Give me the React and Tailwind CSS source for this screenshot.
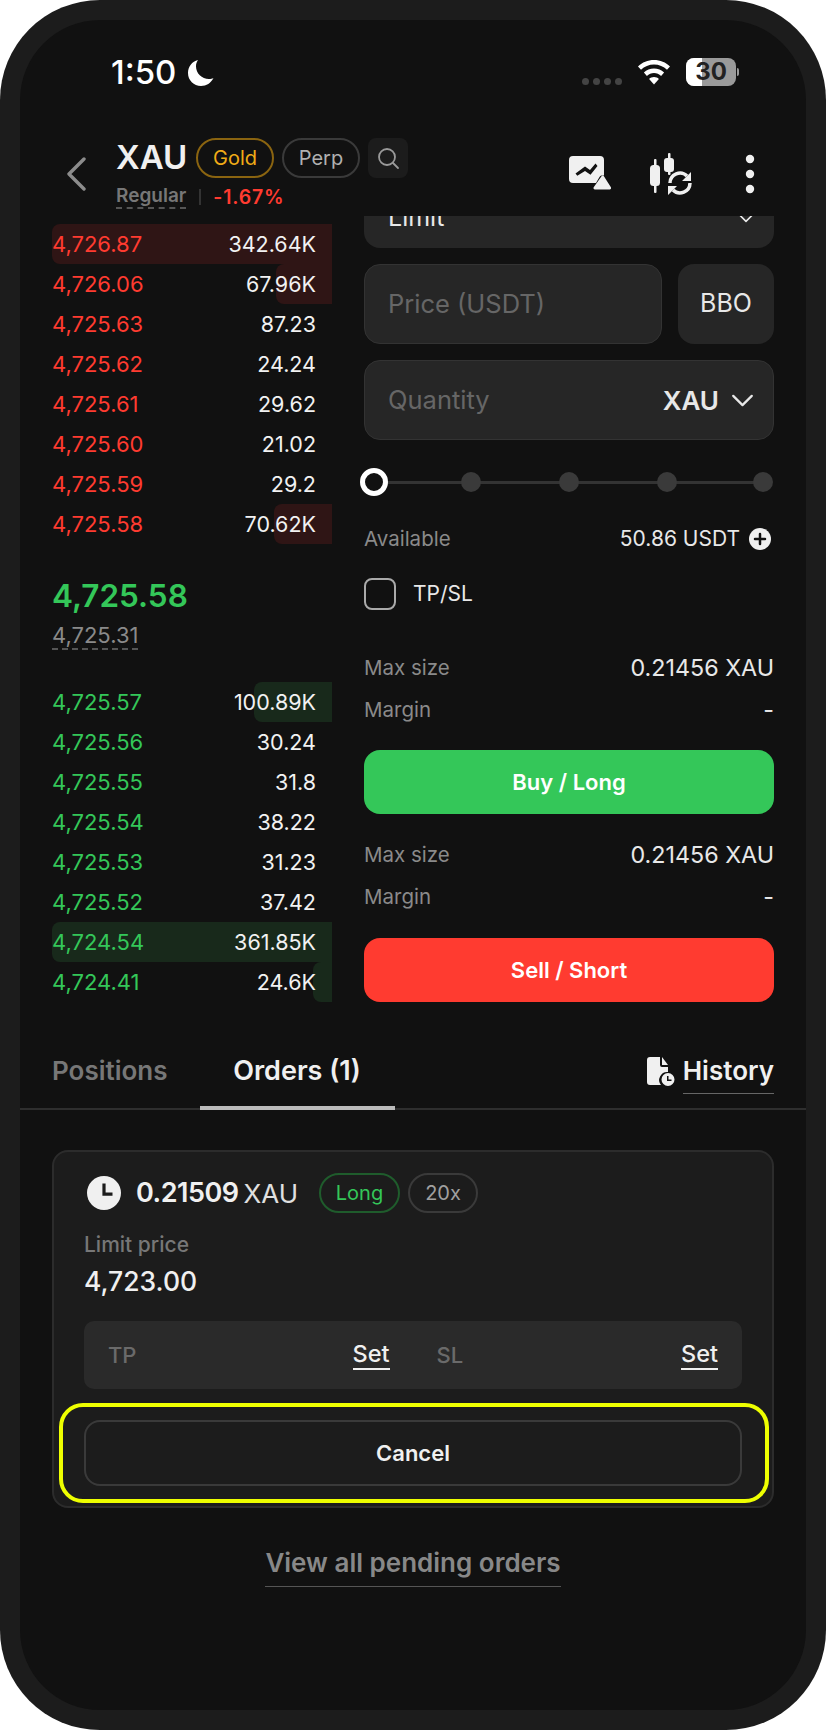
const askRows = [
  { price: '4,726.87', size: '342.64K', depth: 280 },
  { price: '4,726.06', size: '67.96K', depth: 56 },
  { price: '4,725.63', size: '87.23', depth: 0 },
  { price: '4,725.62', size: '24.24', depth: 0 },
  { price: '4,725.61', size: '29.62', depth: 0 },
  { price: '4,725.60', size: '21.02', depth: 0 },
  { price: '4,725.59', size: '29.2', depth: 0 },
  { price: '4,725.58', size: '70.62K', depth: 58 },
];

const bidRows = [
  { price: '4,725.57', size: '100.89K', depth: 78 },
  { price: '4,725.56', size: '30.24', depth: 0 },
  { price: '4,725.55', size: '31.8', depth: 0 },
  { price: '4,725.54', size: '38.22', depth: 0 },
  { price: '4,725.53', size: '31.23', depth: 0 },
  { price: '4,725.52', size: '37.42', depth: 0 },
  { price: '4,724.54', size: '361.85K', depth: 280 },
  { price: '4,724.41', size: '24.6K', depth: 19 },
];

const BookRow = ({ row, ask }) => (
  <div className="relative flex h-10 items-center justify-between pr-4">
    {row.depth > 0 && (
      <div
        className={`absolute right-0 top-0 h-10 rounded-l-[8px] ${ask ? 'bg-[#2f1515]' : 'bg-[#18291b]'}`}
        style={{ width: row.depth }}
      />
    )}
    <span className={`relative text-[22px] ${ask ? 'text-[#ff3b30]' : 'text-[#34c759]'}`}>{row.price}</span>
    <span className="relative text-[21.500px] text-[#f2f2f2]">{row.size}</span>
  </div>
);

const Chevron = ({ className }) => (
  <svg viewBox="0 0 24 14" className={className} fill="none" stroke="currentColor" strokeWidth="2.4" strokeLinecap="round" strokeLinejoin="round">
    <path d="M2 2l10 10L22 2" />
  </svg>
);

const InfoRow = ({ label, value }) => (
  <div className="flex h-[42px] items-center justify-between">
    <span className="text-[20.500px] text-[#8a8a8a]">{label}</span>
    <span className="text-[23.300px] text-[#e8e8e8]">{value}</span>
  </div>
);

export default function App() {
  return (
    <div className="h-[1730px] w-[826px] overflow-hidden rounded-[100px] bg-[#1c1c1c] p-5 font-['Inter',sans-serif]">
      <div className="relative h-full overflow-hidden rounded-[80px] bg-[#111111]">
        {/* status bar */}
        <div className="flex h-[104px] items-center justify-between pl-[91px] pr-[67px]">
          <div className="mt-[2px] flex items-center gap-[11px] text-[33px] font-medium text-white">
            <span>1:50</span>
            <svg viewBox="0 0 28 28" className="h-[28px] w-[28px]" fill="currentColor">
              <path d="M11 1C5 2.500 1 7.600 1 14c0 7.400 5.800 13 13 13 5.400 0 10-3 12.500-8-1.200.6-2.900 1-4.500 1C14.800 20 9 14.500 9 7.300 9 5 9.700 2.800 11 1z" />
            </svg>
          </div>
          <div className="flex items-center">
            <div className="mt-[18px] flex gap-[4px]">
              <div className="h-[7px] w-[7px] rounded-full bg-[#444]" />
              <div className="h-[7px] w-[7px] rounded-full bg-[#444]" />
              <div className="h-[7px] w-[7px] rounded-full bg-[#444]" />
              <div className="h-[7px] w-[7px] rounded-full bg-[#444]" />
            </div>
            <svg viewBox="0 0 34 26" className="ml-[15px] h-[26px] w-[34px]" fill="white">
              <path d="M17 1C10.800 1 5.200 3.400 1 7.400l3 3.400C7.400 7.500 12 5.500 17 5.500s9.600 2 13 5.300l3-3.400C28.800 3.400 23.200 1 17 1z" />
              <path d="M17 9.500c-3.900 0-7.500 1.500-10.100 4l3 3.400c1.900-1.800 4.400-2.900 7.100-2.900s5.200 1.100 7.100 2.900l3-3.400c-2.600-2.500-6.200-4-10.100-4z" />
              <path d="M17 18c-1.900 0-3.600.7-4.900 1.900L17 25.500l4.900-5.600C20.600 18.700 18.900 18 17 18z" />
            </svg>
            <div className="relative ml-[15px] flex h-[28px] w-[50px] items-center justify-center overflow-hidden rounded-[8px] bg-[#9a9a9a] text-[24px] font-bold text-[#222]">
              <div className="absolute inset-y-0 left-0 w-[16px] bg-white" />
              <span className="relative">30</span>
            </div>
            <div className="ml-px h-[8px] w-[2px] rounded-r bg-[#9a9a9a]" />
          </div>
        </div>

        {/* header */}
        <div className="flex h-[92px] pl-[46px] pr-[52px]">
          <svg viewBox="0 0 20 34" className="mt-[33px] h-[34px] w-[20px] text-[#8c8c8c]" fill="none" stroke="currentColor" strokeWidth="3.400" strokeLinecap="round" strokeLinejoin="round">
            <path d="M18 2L3 17l15 15" />
          </svg>
          <div className="ml-[30px] pt-[14px]">
            <div className="flex h-10 items-center">
              <span className="w-[80px] text-[33px] font-semibold text-[#f0f0f0]">XAU</span>
              <span className="flex h-10 w-[78px] items-center justify-center rounded-full border-2 border-[#8a6410] text-[20px] text-[#f0ac17]">Gold</span>
              <span className="ml-2 flex h-10 w-[78px] items-center justify-center rounded-full border-2 border-[#3a3a3a] text-[20px] text-[#b0b0b0]">Perp</span>
              <span className="ml-2 flex h-10 w-10 items-center justify-center rounded-[8px] bg-[#1c1c1c]">
                <svg viewBox="0 0 24 24" className="h-[24px] w-[24px] text-[#999]" fill="none" stroke="currentColor" strokeWidth="1.800" strokeLinecap="round">
                  <circle cx="11" cy="11" r="8" />
                  <path d="M17 17l5 5" />
                </svg>
              </span>
            </div>
            <div className="mt-[7px] flex items-center font-semibold">
              <span className="border-b-2 border-dashed border-[#555] text-[19px] leading-[22px] text-[#777]">Regular</span>
              <span className="ml-[13px] h-[16px] w-[2px] bg-[#333]" />
              <span className="ml-[12px] text-[19.500px] leading-[22px] tracking-[0.8px] text-[#ff3b30]">-1.67%</span>
            </div>
          </div>
          <div className="ml-auto flex items-start pt-[14px] text-[#f0f0f0]">
            <svg viewBox="0 0 44 34" className="mt-[18px] h-[34px] w-[44px]" fill="currentColor">
              <path fillRule="evenodd" d="M4 0h27a4 4 0 0 1 4 4v15.500h-2.500a3 3 0 0 0-2 1.500L27 27H4a4 4 0 0 1-4-4V4a4 4 0 0 1 4-4zm22.500 7.500L21 14l-5-3.500-9.500 7 1.800 2.200L16 15l5.500 3.800 7-8.800z" />
              <path d="M32.500 20.200a1.500 1.500 0 0 1 2.400 0l7 11a1.500 1.500 0 0 1-1.300 2.300H26a1.500 1.500 0 0 1-1.300-2.300z" />
            </svg>
            <svg viewBox="0 0 44 44" className="ml-[36px] mt-[15px] h-[44px] w-[44px]" fill="none">
              <g fill="currentColor">
                <rect x="5" y="6" width="2.500" height="34" rx="1" />
                <rect x="1" y="12" width="10" height="21" rx="3.500" />
                <rect x="19" y="0" width="2.500" height="22" rx="1" />
                <rect x="15" y="5" width="10" height="14" rx="3" />
              </g>
              <path d="M21 30a10 10 0 0 1 17-7" stroke="currentColor" strokeWidth="3.500" />
              <path d="M41 30a10 10 0 0 1-17 7" stroke="currentColor" strokeWidth="3.500" />
              <path d="M42 19v9h-9zM19 42v-9h9z" fill="currentColor" />
            </svg>
            <div className="ml-[53px] mt-[17px] flex flex-col gap-[7px]">
              <div className="h-2 w-2 scale-[1.050] rounded-full bg-current" />
              <div className="h-2 w-2 scale-[1.050] rounded-full bg-current" />
              <div className="h-2 w-2 scale-[1.050] rounded-full bg-current" />
            </div>
          </div>
        </div>

        {/* order book and form */}
        <div className="flex h-[786px] gap-8 overflow-hidden px-8">
          <div className="w-[280px] pt-2">
            {askRows.map((row) => <BookRow key={row.price} row={row} ask />)}
            <div>
              <div className="mt-[31px] text-[31.500px] font-semibold leading-[42px] text-[#34c759]">4,725.58</div>
              <div className="mt-[6px] inline-block border-b-2 border-dashed border-[#555] text-[22px] leading-[25px] text-[#8a8a8a]">4,725.31</div>
            </div>
            <div className="mt-[32px]">
              {bidRows.map((row) => <BookRow key={row.price} row={row} />)}
            </div>
          </div>

          <div className="w-[410px]">
            <div className="-mt-[28px] flex h-[60px] items-center justify-between rounded-[16px] bg-[#262626] pl-6 pr-5 text-[25px] text-[#e8e8e8]">
              <span>Limit</span>
              <Chevron className="h-[10px] w-[16px]" />
            </div>
            <div className="mt-4 flex gap-4">
              <div className="flex h-20 flex-1 items-center rounded-[16px] border border-[#333] bg-[#262626] px-[23px] text-[25.500px] text-[#666]">Price (USDT)</div>
              <div className="flex h-20 w-24 items-center justify-center rounded-[16px] bg-[#262626] text-[25px] text-[#e8e8e8]">BBO</div>
            </div>
            <div className="mt-4 flex h-20 items-center justify-between rounded-[16px] border border-[#333] bg-[#262626] pl-[23px] pr-[19px] text-[25.500px]">
              <span className="text-[#666]">Quantity</span>
              <span className="flex items-center gap-[12px] text-[26px] font-semibold text-[#e8e8e8]">
                XAU
                <Chevron className="h-[13px] w-[23px]" />
              </span>
            </div>
            <div className="relative mt-[28px] flex h-7 items-center">
              <div className="absolute left-0 right-2 top-[13px] h-[3px] bg-[#333]" />
              <div className="relative -ml-[4px] h-7 w-7 rounded-full border-[5px] border-white bg-[#111]" />
              <div className="relative ml-[73px] h-5 w-5 rounded-full bg-[#3a3a3a]" />
              <div className="relative ml-[78px] h-5 w-5 rounded-full bg-[#3a3a3a]" />
              <div className="relative ml-[78px] h-5 w-5 rounded-full bg-[#3a3a3a]" />
              <div className="relative ml-[76px] h-5 w-5 rounded-full bg-[#3a3a3a]" />
            </div>
            <div className="mt-[29px] flex h-7 items-center justify-between">
              <span className="text-[20.500px] text-[#8a8a8a]">Available</span>
              <span className="flex items-center gap-[9px] pr-[3px] text-[21px] text-[#e8e8e8]">
                50.86 USDT
                <svg viewBox="0 0 22 22" className="h-[22px] w-[22px]">
                  <circle cx="11" cy="11" r="11" fill="#f0f0f0" />
                  <path d="M11 6v10M6 11h10" stroke="#111" strokeWidth="2.500" strokeLinecap="round" />
                </svg>
              </span>
            </div>
            <div className="mt-[25px] flex items-center gap-[17px]">
              <div className="h-8 w-8 rounded-[8px] border-2 border-[#aaa]" />
              <span className="text-[21px] text-[#e8e8e8]">TP/SL</span>
            </div>
            <div className="mt-[37px]">
              <InfoRow label="Max size" value="0.21456 XAU" />
              <InfoRow label="Margin" value="-" />
            </div>
            <div className="mt-[19px] flex h-16 items-center justify-center rounded-[16px] bg-[#34c759] text-[22px] font-semibold text-white">Buy / Long</div>
            <div className="mt-5">
              <InfoRow label="Max size" value="0.21456 XAU" />
              <InfoRow label="Margin" value="-" />
            </div>
            <div className="mt-5 flex h-16 items-center justify-center rounded-[16px] bg-[#ff3b30] text-[22px] font-semibold text-white">Sell / Short</div>
          </div>
        </div>

        {/* tabs */}
        <div className="flex h-[108px] items-start border-b-2 border-[#2e2e2e] px-8">
          <div className="relative flex h-[108px] w-full font-semibold">
            <span className="mt-[51px] text-[26px] leading-9 text-[#777]">Positions</span>
            <div className="relative ml-[32px] h-[108px] w-[195px] border-b-4 border-[#bbbbbb] text-center">
              <span className="mt-[51px] block text-[27px] leading-9 text-[#f0f0f0]">Orders (1)</span>
            </div>
            <div className="ml-auto mt-[51px] flex h-[46px] items-start text-[26px]">
              <svg viewBox="0 0 28 30" className="mt-[4px] h-[30px] w-[28px]" fill="#f0f0f0">
                <path d="M3 0h10v8a2 2 0 0 0 2 2h6v5a8 8 0 0 0-7 13H3a3 3 0 0 1-3-3V3a3 3 0 0 1 3-3zM15 0l6 8h-6zM4 17h7v2H4zm0 4h6v2H4z" />
                <path fillRule="evenodd" d="M21 16a6.500 6.500 0 1 1 0 13 6.500 6.500 0 0 1 0-13zm-1 3v5h4.500v-1.500H21.500V19z" />
              </svg>
              <span className="ml-[8px] border-b border-[#666] pb-[4px] leading-9 text-[#f0f0f0]">History</span>
            </div>
          </div>
        </div>

        {/* open order */}
        <div className="relative mx-8 mt-[40px] h-[358px] rounded-[16px] border-2 border-[#2c2c2c] bg-[#1c1c1c] px-[30px] pt-[21px]">
          <div className="flex h-[40px] items-center">
            <svg viewBox="0 0 32 32" className="ml-[3px] h-[34px] w-[34px]">
              <circle cx="16" cy="16" r="16" fill="#f0f0f0" />
              <path d="M16 7v10h8" fill="none" stroke="#1c1c1c" strokeWidth="3" />
            </svg>
            <span className="ml-[15px] text-[27px] font-semibold tracking-[-0.5px] text-[#f0f0f0]">0.21509</span>
            <span className="ml-[5px] text-[26px] text-[#e0e0e0]">XAU</span>
            <span className="ml-[21px] flex h-[40px] w-[81px] items-center justify-center rounded-full border-2 border-[#1f5c2c] text-[20px] text-[#34c759]">Long</span>
            <span className="ml-2 flex h-[40px] w-[70px] items-center justify-center rounded-full border-2 border-[#3a3a3a] text-[20px] text-[#a0a0a0]">20x</span>
          </div>
          <div className="mt-[18px] text-[21px] font-medium leading-7 text-[#777]">Limit price</div>
          <div className="mt-[6px] text-[26.500px] font-medium leading-8 text-[#f0f0f0]">4,723.00</div>
          <div className="mt-[24px] grid h-[68px] w-[658px] grid-cols-2 items-center gap-[47px] rounded-[10px] bg-[#2a2a2a] px-6 text-[22px] font-medium">
            <div className="flex items-center justify-between">
              <span className="text-[#6a6a6a]">TP</span>
              <span className="border-b-2 border-[#f0f0f0] text-[23.500px] leading-[28px] text-[#f0f0f0]">Set</span>
            </div>
            <div className="flex items-center justify-between">
              <span className="text-[#6a6a6a]">SL</span>
              <span className="border-b-2 border-[#f0f0f0] text-[23.500px] leading-[28px] text-[#f0f0f0]">Set</span>
            </div>
          </div>
          <div className="mt-[31px] flex h-[66px] w-[658px] items-center justify-center rounded-[16px] border-2 border-[#3a3a3a] text-[22px] font-semibold text-[#f0f0f0]">Cancel</div>
          <div className="absolute bottom-[3px] left-[5px] right-[3px] h-[100px] rounded-[24px] border-4 border-[#eeff00]" />
        </div>

        <div className="mt-[37px] flex justify-center">
          <span className="border-b border-[#555] pb-[5px] text-[26px] font-semibold leading-9 text-[#888]">View all pending orders</span>
        </div>
      </div>
    </div>
  );
}
